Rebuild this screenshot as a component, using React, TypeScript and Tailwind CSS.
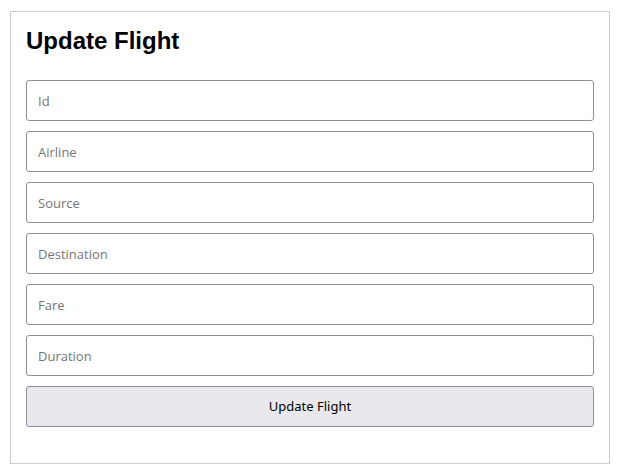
const fields = ['Id', 'Airline', 'Source', 'Destination', 'Fare', 'Duration'];

export default function App() {
    return (
        <div className="pl-[10px] pt-[11px] pb-[11px] bg-white min-h-[475px]">
            <div className="w-[600px] h-[453px] border border-[#cccccc] px-[15px] pt-[15px]">
                <h1 className="font-['Liberation_Sans',Arial,sans-serif] text-[24px] leading-[28px] font-bold text-black mb-[25px]">
                    Update Flight
                </h1>
                <form className="flex flex-col gap-[10px]" onSubmit={(e) => e.preventDefault()}>
                    {fields.map((f) => (
                        <input
                            key={f}
                            type="text"
                            placeholder={f}
                            className="h-[41px] w-full border border-[#8f8f9d] rounded-[3px] px-[11px] font-['Open_Sans',sans-serif] text-[13px] text-black placeholder:text-[#757575] bg-white outline-none"
                        />
                    ))}
                    <button
                        type="submit"
                        className="h-[41px] w-full border border-[#8f8f9d] rounded-[3px] bg-[#e9e9ed] font-['Noto_Sans',sans-serif] text-[13px] text-black"
                    >
                        Update Flight
                    </button>
                </form>
            </div>
        </div>
    );
}
